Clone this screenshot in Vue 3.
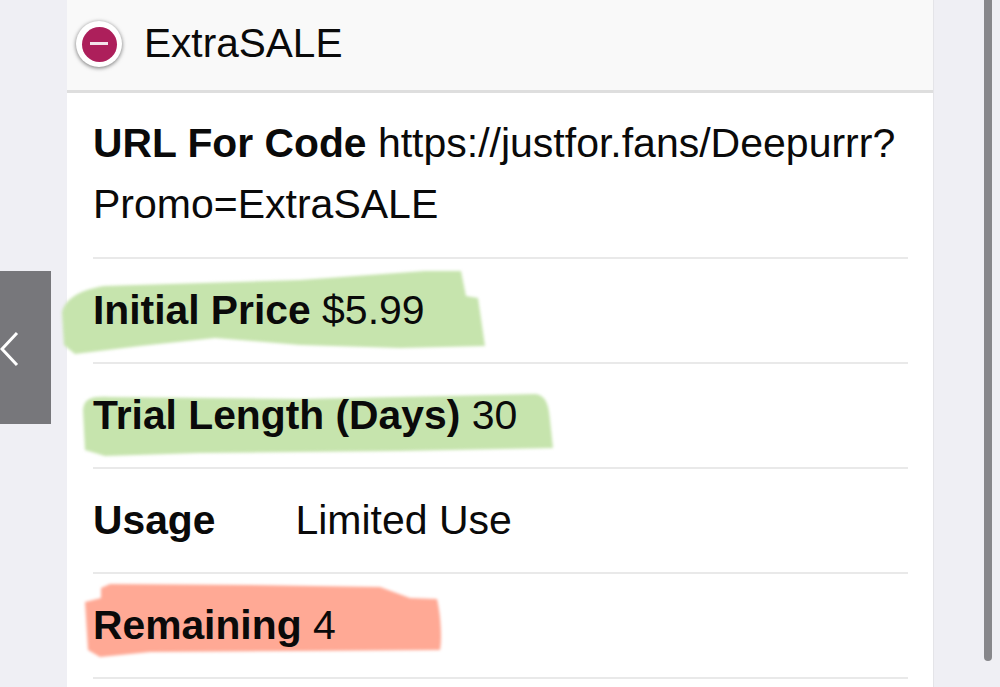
<script setup>
const rows = [
  { label: 'Initial Price', value: '$5.99', fill: '#c6e4ad', top: 259, stroke: 'M62 312 C66 298 80 290 104 286 L300 280 L425 271 L461 271 L466 296 L478 298 L485 346 L400 348 L300 345 L215 338 L140 346 L75 354 L64 345 Z' },
  { label: 'Trial Length (Days)', value: '30', fill: '#c6e4ad', top: 364, stroke: 'M83 410 C84 398 92 396 110 397 L300 399 L535 394 C547 395 549 408 550 420 L553 448 L400 451 L200 453 L105 456 L85 450 Z' },
  { label: 'Usage', value: 'Limited Use', wide: true, top: 469 },
  { label: 'Remaining', value: '4', fill: '#ffa995', top: 574, stroke: 'M101 588 L110 584 L250 585 L380 587 L410 598 L437 599 C441 615 442 640 440 650 L300 651 L150 652 L100 657 L88 650 L85 602 L101 598 Z' },
]
</script>

<template>
  <div class="page">
    <section class="card">
      <header class="card-head">
        <span class="toggle"><span class="minus" /></span>
        <span class="code">ExtraSALE</span>
      </header>

      <div class="card-body">
        <div class="row row--first">
          <p><b>URL For Code</b> https://justfor.fans/Deepurrr?<br>Promo=ExtraSALE</p>
        </div>
        <div v-for="row in rows" :key="row.label" class="row">
          <svg
            v-if="row.stroke"
            class="marker"
            width="520"
            height="105"
            :viewBox="`53 ${row.top} 520 105`"
          >
            <path :d="row.stroke" :fill="row.fill" />
          </svg>
          <p>
            <b :class="{ wide: row.wide }">{{ row.label }}</b> {{ row.value }}
          </p>
        </div>
      </div>
    </section>

    <button class="prev" aria-label="Previous">
      <svg width="22" height="40" viewBox="0 0 22 40">
        <path d="M17 5 L2 21 L17 37" fill="none" stroke="#fff" stroke-width="3" />
      </svg>
    </button>
    <div class="scrollbar" />
  </div>
</template>

<style>
html, body {
  margin: 0;
  background: #efeff4;
}
</style>

<style scoped>
.page {
  position: relative;
  height: 687px;
  overflow: hidden;
  background: #efeff4;
  font-family: "Liberation Sans", Arial, sans-serif;
  color: #0a0a0a;
}

.card {
  width: 866px;
  margin-left: 67px;
  height: 687px;
  background: #fff;
  border-right: 1px solid #e4e4e8;
}

.card-head {
  height: 90px;
  display: flex;
  align-items: center;
  padding-left: 9px;
  background: #f9f9f9;
  border-bottom: 3px solid #dedede;
}

.toggle {
  width: 46px;
  height: 46px;
  border-radius: 50%;
  background: #fff;
  box-shadow: 0 1px 4px rgba(0, 0, 0, 0.55);
  display: flex;
  align-items: center;
  justify-content: center;
  margin-top: -2px;
}

.toggle .minus {
  width: 35px;
  height: 35px;
  border-radius: 50%;
  background: #ad1f5b;
  position: relative;
}

.toggle .minus::after {
  content: "";
  position: absolute;
  left: 8px;
  right: 9px;
  top: 15px;
  height: 3px;
  background: #f3e3ea;
}

.code {
  margin-left: 22px;
  font-size: 40.6px;
  line-height: 1;
  margin-top: -4px;
}

.card-body {
  padding: 0 25px 0 26px;
}

.row {
  position: relative;
  height: 105px;
  box-sizing: border-box;
  display: flex;
  align-items: center;
  border-bottom: 2px solid #e9e9e9;
}

.row--first {
  height: 166px;
  padding-bottom: 2px;
}

.row p {
  position: relative;
  margin: 0;
  font-size: 41px;
  line-height: 61px;
}

.row b {
  font-weight: 700;
  font-size: 40.8px;
}

.row b.wide {
  display: inline-block;
  width: 191px;
}

.marker {
  position: absolute;
  left: -40px;
  top: 0;
  overflow: visible;
  filter: blur(1.5px);
}

.prev {
  position: absolute;
  left: 0;
  top: 271px;
  width: 51px;
  height: 153px;
  padding: 0;
  border: 0;
  background: #77777b;
  display: flex;
  align-items: center;
}

.scrollbar {
  position: absolute;
  top: 0;
  left: 984px;
  width: 8px;
  height: 661px;
  border-radius: 0 0 4px 4px;
  background: #87878b;
}
</style>
